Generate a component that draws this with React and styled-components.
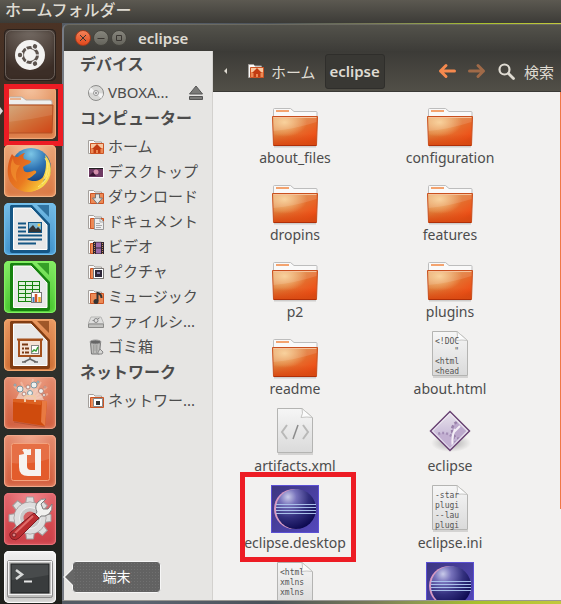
import React, { useId } from 'react';
import styled, { createGlobalStyle, css } from 'styled-components';

const GlobalStyle = createGlobalStyle`
  *, *::before, *::after { box-sizing: border-box; }
  body { margin: 0; }
  button { font: inherit; color: inherit; border: 0; padding: 0; background: none; }
  ul { list-style: none; margin: 0; padding: 0; }
  svg { display: block; flex: none; }
`;

const Desktop = styled.div`
  height: 100vh;
  display: flex;
  flex-direction: column;
  overflow: hidden;
  font-family: 'Noto Sans', 'Noto Sans CJK JP', sans-serif;
  font-size: 15px;
  color: #4c4c4c;
  background: linear-gradient(90deg, #4c5257 0%, #5c6470 25%, #4b525a 48%, #787a58 66%, #8c9850 74%, #a8c02c 85%, #c2c83c 100%);
`;

const MenuBar = styled.header`
  flex: none;
  height: 23px;
  padding: 0 5px;
  line-height: 21px;
  font-size: 16px;
  font-weight: 500;
  color: #dfdbd2;
  background: linear-gradient(#5c5951, #3c3b37);
`;

const Workspace = styled.div`
  flex: 1;
  min-height: 0;
  display: flex;
`;

const Launcher = styled.nav`
  flex: none;
  z-index: 2;
  width: 62px;
  padding: 6px 4px 0;
  display: flex;
  flex-direction: column;
  gap: 6px;
  background: linear-gradient(#4b3325, #3b2c23 18%, #3b3a30 36%, #2e302b 60%, #1e201c);
`;

const Tile = styled.button`
  position: relative;
  flex: none;
  width: 52px;
  height: 52px;
  border-radius: 5px;
  background: ${(p) => p.$paint};
  box-shadow: inset 0 0 0 1px ${(p) => p.$edge}, inset 0 0 5px ${(p) => p.$edge};
`;

const pip = css`
  content: '';
  position: absolute;
  top: 20px;
  border: solid transparent;
  border-width: 4px 0;
`;

const RunningMarks = styled.span`
  &::before { ${pip} left: -4px; border-left: 3px solid #ddd; }
  &::after { ${pip} right: -5px; border-right: 3px solid #ddd; }
`;

const Highlight = styled.span`
  position: absolute;
  pointer-events: none;
  border: 5px solid #ed1c24;
  inset: ${(p) => p.$inset};
`;

const Tooltip = styled.span`
  position: absolute;
  left: 68px;
  top: 10px;
  width: 89px;
  height: 32px;
  line-height: 30px;
  text-align: center;
  font-size: 14px;
  color: #fff;
  border: 1px solid #f6f6f6;
  border-radius: 4px;
  background: radial-gradient(#707070 1px, transparent 1px) 0 0 / 3px 3px, #626262;
  &::before, &::after {
    content: '';
    position: absolute;
    border: solid transparent;
    border-width: 9px 0;
  }
  &::before { left: -10px; top: 6px; border-right: 10px solid #f6f6f6; }
  &::after { left: -8px; top: 6px; border-right: 9px solid #666; }
`;

const Frame = styled.main`
  flex: 1;
  min-width: 0;
  display: flex;
  flex-direction: column;
  margin: 1px 0 3px;
  border-left: 2px solid #767b84;
  border-bottom: 1px solid #9a9893;
  border-top-left-radius: 6px;
`;

const TitleBar = styled.div`
  flex: none;
  height: 27px;
  padding-left: 11px;
  display: flex;
  align-items: center;
  gap: 2px;
  border-top: 1px solid #6b6a61;
  border-top-left-radius: 5px;
  color: #dfdbd2;
  background: linear-gradient(#53524b, #3d3c38);
`;

const Control = styled.button`
  width: 16px;
  height: 16px;
  border-radius: 50%;
  border: 1px solid ${(p) => (p.$close ? '#a03a1c' : '#45443e')};
  background: ${(p) => (p.$close ? 'linear-gradient(#f58258, #e2481c)' : 'linear-gradient(#86857c, #65645c)')};
`;

const Title = styled.h1`
  margin: 0 0 0 9px;
  font-size: 15px;
  line-height: 20px;
  font-weight: 600;
`;

const Panes = styled.div`
  flex: 1;
  min-height: 0;
  display: flex;
`;

const Sidebar = styled.aside`
  flex: none;
  width: 149px;
  border-right: 1px solid #d3d1ce;
  background: #e6e5e3;
`;

const SectionTitle = styled.h2`
  margin: 0;
  padding-left: 16px;
  line-height: 27px;
  font-size: 16px;
  font-weight: 700;
`;

const Places = styled.ul`
  padding-top: 2px;
`;

const Place = styled.li`
  display: flex;
  align-items: center;
  height: 25px;
  padding: 0 9px 0 24px;
`;

const PlaceLink = styled.a`
  flex: 1;
  display: flex;
  align-items: center;
  gap: 4px;
  color: inherit;
  text-decoration: none;
  white-space: nowrap;
  font-size: 15px;
  line-height: 25px;
`;

const Browser = styled.section`
  flex: 1;
  min-width: 0;
  display: flex;
  flex-direction: column;
`;

const Toolbar = styled.div`
  flex: none;
  height: 41px;
  padding: 0 7px 0 10px;
  display: flex;
  align-items: center;
  color: #dfdbd2;
  border-bottom: 1px solid #3a3935;
  background: linear-gradient(#3c3b37, #514f47);
`;

const Crumb = styled.button`
  display: flex;
  align-items: center;
  gap: 7px;
  height: 35px;
  padding: 0 ${(p) => (p.$wide ? '9px 0 20px' : '0')};
  white-space: nowrap;
`;

const CurrentCrumb = styled(Crumb)`
  width: 60px;
  justify-content: center;
  font-weight: 600;
  border: 1px solid #2f2e2b;
  border-radius: 3px;
  background: #393834;
`;

const SearchButton = styled(Crumb)`
  gap: 9px;
`;

const Actions = styled.div`
  margin-left: auto;
  display: flex;
  align-items: center;
  gap: 12px;
`;

const Content = styled.div`
  flex: 1;
  min-height: 0;
  display: flex;
  overflow: hidden;
  background: #f2f1f0;
`;

const FileGrid = styled.ul`
  flex: 1;
  display: grid;
  grid-template-columns: repeat(auto-fill, 154px);
  grid-auto-rows: 68px;
  align-content: start;
  gap: 9px 1px;
  padding: 8px 0 0 5px;
`;

const FileCell = styled.li`
  position: relative;
  display: flex;
  justify-content: center;
`;

const FileButton = styled.button`
  display: flex;
  flex-direction: column;
  align-items: center;
  font-size: 14px;
  line-height: 20px;
`;

const ScrollMark = styled.div`
  flex: none;
  width: 1px;
  height: 82%;
  background: #f07746;
`;

/* ---------- launcher artwork ---------- */

const UbuntuLogo = () => (
  <svg width="52" height="52" viewBox="0 0 52 52">
    <rect x="1.5" y="1.5" width="49" height="49" rx="6" fill="none" stroke="#8a827c" strokeOpacity=".6" />
    <circle cx="26" cy="26" r="15" fill="#f3f2f1" />
    <circle cx="26" cy="26" r="7.5" fill="none" stroke="#5c534e" strokeWidth="3" />
    {[60, 180, 300].map((a) => (
      <g key={a} transform={`rotate(${a} 26 26)`}>
        <circle cx="36" cy="26" r="3.4" fill="#f3f2f1" />
        <circle cx="36" cy="26" r="2.2" fill="#5c534e" />
      </g>
    ))}
    {[0, 120, 240].map((a) => (
      <path key={a} d="M31 26h6" stroke="#f3f2f1" strokeWidth="1.2" transform={`rotate(${a} 26 26)`} />
    ))}
  </svg>
);

const HomeFolderLogo = () => {
  const id = useId();
  return (
    <svg width="52" height="52" viewBox="0 0 52 52">
      <defs>
        <linearGradient id={id} x1="0" y1="0" x2="1" y2="1">
          <stop offset="0" stopColor="#cfa070" />
          <stop offset=".5" stopColor="#d07038" />
          <stop offset="1" stopColor="#d04416" />
        </linearGradient>
      </defs>
      <path d="M4 18v-6q0-2 2-2h12l4 3h24q2 0 2 2v3z" fill="#eee" stroke="#b9aea6" />
      <path d="M6 12h11" stroke="#e9b28e" strokeWidth="2" />
      <path d="M3 18h46l-1 28H4z" fill={`url(#${id})`} stroke="#b55125" />
      <path d="M4 19h44v9Q26 33 4 35z" fill="#fff" opacity=".1" />
    </svg>
  );
};

const FirefoxLogo = () => {
  const id = useId();
  return (
    <svg width="52" height="52" viewBox="0 0 52 52">
      <defs>
        <radialGradient id={id} cx=".5" cy=".15" r=".85">
          <stop offset="0" stopColor="#7cc6e6" />
          <stop offset=".45" stopColor="#2f74b4" />
          <stop offset="1" stopColor="#0d2a62" />
        </radialGradient>
        <linearGradient id={`${id}f`} x1="0" y1="0" x2="1" y2=".8">
          <stop offset="0" stopColor="#d9541c" />
          <stop offset=".6" stopColor="#ea7a20" />
          <stop offset="1" stopColor="#f9cf3a" />
        </linearGradient>
      </defs>
      <circle cx="27" cy="23" r="20" fill={`url(#${id})`} />
      <path d="M41 10c7 7 8 19 2 27-4 6-10 9-17 9 8-3 14-7 16-14-2 2-3 2-4 2 4-7 5-15 3-24z" fill="#f8d94a" />
      <path d="M8 9c1 2 3 3 6 3 2-2 5-4 7-4-2 2-2 4-1 6 2 1 5 1 7 2 0 2-2 3-5 4l-3 2 1 4c3 2 6 1 9 0 2-1 4 0 3 2-3 2-5 5-9 6 6 4 14 2 18-4-1 10-8 17-16 17C13 47 5 39 4 30c-1-8 1-16 4-21z" fill={`url(#${id}f)`} />
      <path d="M9 13c-4 8-3 18 4 24-2-7-1-12 3-17-4 1-7-2-7-7z" fill="#f29330" opacity=".65" />
      <path d="M41 13c4 7 3 14-1 21M44 17c3 9 0 17-6 22M34 42c6-4 9-10 9-17" stroke="#fbe879" fill="none" />
    </svg>
  );
};

const OfficeLogo = ({ dark, children }) => (
  <svg width="52" height="52" viewBox="0 0 52 52">
    <path d="M33 2h12v12z" fill={dark} opacity=".7" />
    <path d="M7 2h21l18 19v27q0 2-2 2H8q-2 0-2-2V3z" fill={dark} />
    <path d="M9.500 5H27l16 17v24.500H9.500z" fill="#e8e8e8" stroke="#fff" />
    {children}
  </svg>
);

const WriterLogo = () => (
  <OfficeLogo dark="#155684">
    <path d="M14 20.500h8M14 24.500h8M14 28.500h8M14 32.500h24M14 36.500h24M14 40.500h18" stroke="#155684" strokeWidth="2" />
    <rect x="24.500" y="19.500" width="13" height="10" fill="#7db9d8" stroke="#155684" />
    <path d="M25 29v-3l4-4 3 4 2-2 3 3v2z" fill="#333" />
    <circle cx="35" cy="22" r="1.500" fill="#f7c749" />
  </OfficeLogo>
);

const CalcLogo = () => (
  <OfficeLogo dark="#16820f">
    <rect x="14" y="20" width="22" height="21" fill="#16820f" />
    {[22, 26, 30, 34, 38].map((y) => (
      <path key={y} d={`M15 ${y + 0.5}h6m1 0h6m1 0h6`} stroke="#dff0da" strokeWidth="3" />
    ))}
    <rect x="27.500" y="31.500" width="10" height="10" fill="#fff" stroke="#777" />
    <path d="M29.500 41v-5" stroke="#3c7fc0" strokeWidth="2" />
    <path d="M32 41v-8" stroke="#d0542a" strokeWidth="2.500" />
    <path d="M35.500 41v-5" stroke="#e8a72c" strokeWidth="2.500" />
  </OfficeLogo>
);

const ImpressLogo = () => (
  <OfficeLogo dark="#823d12">
    <rect x="15" y="21" width="22" height="16" fill="#f4e3d6" stroke="#a5501c" strokeWidth="2" />
    <path d="M13 20.500h26" stroke="#a5501c" strokeWidth="2" />
    <path d="M18 25.500h6M18 29.500h2m1 0h4M18 33.500h2m1 0h4" stroke="#7a3a14" strokeWidth="2" />
    <rect x="27.500" y="26.500" width="7" height="8" fill="#fff" stroke="#888" />
    <path d="M28 33l2-2 2 1 2-4" stroke="#37a037" fill="none" strokeWidth="1.500" />
    <path d="M26 38v2l-6 3M26 40l6 3M18 43h4m8 0h4" stroke="#666" fill="none" strokeWidth="1.500" />
  </OfficeLogo>
);

const SoftwareLogo = () => (
  <svg width="52" height="52" viewBox="0 0 52 52">
    <path d="M26 24L10 9M26 24L17 5M26 24L29 2M26 24L37 5M26 24L43 10M26 24L44 17" stroke="#f6c7b0" strokeWidth="2" opacity=".6" />
    <path d="M12 22l5-10 8-3 9 3 6 11z" fill="#f2d0c0" opacity=".75" />
    {[[16, 12, 3], [24, 10, 2], [30, 8, 3], [37, 14, 2.5], [26, 16, 2.5], [20, 17, 2], [34, 5, 1], [41, 10, 1], [11, 8, 1], [40, 18, 1.500]].map(([x, y, r], i) => (
      <circle key={i} cx={x} cy={y} r={r} fill="#eef0ee" stroke={i % 2 ? '#b98376' : '#7b99a4'} />
    ))}
    <path d="M9 22l34 2-2 25-32-5z" fill="#cf4b0d" />
    <path d="M38 24l5 0-2 25-4-4z" fill="#e87a42" />
    <path d="M9 22l29 2-1 4-28-3z" fill="#dc6121" />
    <path d="M21 25v-4q0-2 2-2h6q2 0 2 2v4" fill="none" stroke="#f1caa7" strokeWidth="2" />
    <path d="M10 45l31 5" stroke="#8f3b1c" opacity=".4" />
  </svg>
);

const UbuntuOneLogo = () => (
  <svg width="52" height="52" viewBox="0 0 52 52">
    <rect x="7.500" y="8.500" width="38" height="37" rx="2" fill="#e35c2c" stroke="#f3a27d" />
    <path d="M8 9h37v15Q26 30 8 28z" fill="#fff" opacity=".12" />
    <path d="M15 32V20l5-1-1-5h4v17q0 4 4 4h4V14h6v27H24q-9 0-9-9z" fill="#f6f2ef" />
    <path d="M20 20v-3l-2-2 9-1v6z" fill="#f6f2ef" />
  </svg>
);

const SettingsLogo = () => (
  <svg width="52" height="52" viewBox="0 0 52 52">
    <g fill="#dedede" stroke="#a19b9b">
      {[0, 45, 90, 135, 180, 225, 270, 315].map((a) => (
        <path key={a} d="M21.500 12l1-8h7l1 8z" transform={`rotate(${a} 26 25)`} />
      ))}
      <circle cx="26" cy="25" r="16" />
    </g>
    <circle cx="26" cy="25" r="15.500" fill="#dedede" />
    <circle cx="26" cy="25" r="10.500" fill="#c9c9c9" stroke="#f0f0f0" />
    <circle cx="26" cy="25" r="6.500" fill="#d45f61" />
    <path d="M30 23l3-4q-3-6 1-10 3-4 8-3l-5 5 2 5 5 0 4-5q1 6-3 10-4 3-8 2l-3 4z" fill="#f1f1ef" stroke="#7c7c7c" />
    <path d="M30 20l5 5-20 20q-3 3-7 1-4-4-1-7z" fill="#ba2e31" stroke="#7e1c22" />
    <path d="M29 23L9 42" stroke="#e06d6b" strokeWidth="2" />
    <circle cx="10" cy="42" r="2" fill="#d98080" stroke="#7e1c22" />
  </svg>
);

const TerminalLogo = () => (
  <svg width="52" height="52" viewBox="0 0 52 52">
    <rect x="3.500" y="9.500" width="45" height="37" rx="2" fill="#bfbfbd" stroke="#888" />
    <rect x="4.500" y="10.500" width="43" height="33" fill="none" stroke="#f2f2f2" />
    <rect x="7" y="13" width="38" height="29" fill="#393c3d" stroke="#1f2122" />
    <path d="M7.500 13.500h37V24Q26 28 7.500 29z" fill="#fff" opacity=".08" />
    <path d="M12 19l6 4.500-6 4.500" fill="none" stroke="#d8dad9" strokeWidth="2.500" />
    <path d="M20 30.500h8" stroke="#e6e6e6" strokeWidth="2" />
  </svg>
);

/* ---------- file artwork ---------- */

const FolderIcon = () => {
  const id = useId();
  return (
    <svg width="48" height="48" viewBox="0 0 48 48">
      <defs>
        <linearGradient id={id} x1="0" y1="0" x2="1" y2="1">
          <stop offset="0" stopColor="#e39a5c" />
          <stop offset=".4" stopColor="#e07c38" />
          <stop offset=".8" stopColor="#ee5118" />
          <stop offset="1" stopColor="#d03c0c" />
        </linearGradient>
        <linearGradient id={`${id}b`} x1="0" y1="0" x2="0" y2="1">
          <stop offset=".6" stopColor="#d84a12" stopOpacity="0" />
          <stop offset="1" stopColor="#d84a12" />
        </linearGradient>
        <radialGradient id={`${id}g`} cx=".27" cy=".2" r=".5">
          <stop offset="0" stopColor="#ffe2a8" stopOpacity=".75" />
          <stop offset="1" stopColor="#ffe2a8" stopOpacity="0" />
        </radialGradient>
      </defs>
      <path d="M3 46.500h42" stroke="#000" strokeOpacity=".15" strokeWidth="2" />
      <path d="M2.500 17V9.500q0-1 1-1h16l3.500 3h22q1 0 1 1V17z" fill="#f9f9f9" stroke="#bdbdbd" />
      <path d="M5 11h13" stroke="#f3a36f" strokeWidth="2" />
      <path d="M1.500 16.500h45l-1 29h-43z" fill={`url(#${id})`} />
      <path d="M1.500 16.500h45l-1 29h-43z" fill={`url(#${id}b)`} />
      <path d="M1.500 16.500h45l-1 29h-43z" fill={`url(#${id}g)`} stroke="#c9501f" />
      <path d="M2.500 18v13Q24 29 45.500 22v-4z" fill="#fff" opacity=".12" />
      <path d="M2.500 17.500h43" stroke="#f6c39c" />
      <path d="M3 45.500h42" stroke="#b02f08" />
    </svg>
  );
};

const Paper = ({ children }) => {
  const id = useId();
  return (
    <svg width="48" height="48" viewBox="0 0 48 48">
      <defs>
        <linearGradient id={id} x1="0" y1="0" x2="0" y2="1">
          <stop offset="0" stopColor="#f6f6f6" />
          <stop offset="1" stopColor="#dadada" />
        </linearGradient>
        <clipPath id={`${id}c`}><path d="M8 1h32v44H8z" /></clipPath>
      </defs>
      <path d="M7 46h35" stroke="#000" strokeOpacity=".12" strokeWidth="2" />
      <path d="M6.500 .5H31l10.500 9v35h-35z" fill={`url(#${id})`} stroke="#b4b4b2" />
      <path d="M31 .5q1.500 5-1 9 6-1 11.500 0z" fill="#fbfbfb" stroke="#c5c5c3" />
      <g clipPath={`url(#${id}c)`}>{children}</g>
    </svg>
  );
};

const SnippetText = styled.text`
  font-family: 'DejaVu Sans Mono', monospace;
  font-size: 8px;
  fill: #555;
  white-space: pre;
`;

const Snippet = ({ lines }) => (
  <Paper>
    {lines.map((line, i) => (
      <SnippetText key={i} x="9" y={13 + i * 10}>{line}</SnippetText>
    ))}
  </Paper>
);

const MarkupIcon = () => (
  <Paper>
    <path d="M16 17l-5 7 5 7M32 17l5 7-5 7" fill="none" stroke="#b9b9b8" strokeWidth="2" />
    <path d="M27 17l-5 14" stroke="#8b8b8b" strokeWidth="1.500" />
  </Paper>
);

const ExecIcon = () => {
  const id = useId();
  return (
    <svg width="48" height="48" viewBox="0 0 48 48">
      <defs>
        <linearGradient id={id} x1="0" y1="0" x2="0" y2="1">
          <stop offset="0" stopColor="#e9e4ec" />
          <stop offset="1" stopColor="#b4a0cb" />
        </linearGradient>
        <radialGradient id={`${id}s`}>
          <stop offset="0" stopOpacity=".3" />
          <stop offset="1" stopOpacity="0" />
        </radialGradient>
        <clipPath id={`${id}c`}><path d="M24 7l16 16-16 16L8 23z" /></clipPath>
      </defs>
      <ellipse cx="25" cy="35" rx="20" ry="9" fill={`url(#${id}s)`} />
      <path d="M24 3.500L43.500 23 24 42.500 4.500 23z" fill={`url(#${id})`} stroke="#6a4474" strokeWidth="1.500" />
      <path d="M24 5.500L41.500 23 24 40.500 6.500 23z" fill="none" stroke="#f5f1f7" />
      <g clipPath={`url(#${id}c)`}>
        <circle cx="17" cy="38" r="13" fill="#c3b0d2" stroke="#a48eb6" strokeWidth="2.500" strokeDasharray="2 2" />
        <circle cx="35" cy="22" r="9" fill="#bca8cc" stroke="#9a82ab" strokeWidth="2.500" strokeDasharray="3 2" />
        <path d="M29 21q-4 9-2 18M27 25l7-7" stroke="#f3eef6" strokeWidth="2" fill="none" />
      </g>
    </svg>
  );
};

const EclipseIcon = () => {
  const id = useId();
  return (
    <svg width="48" height="48" viewBox="0 0 48 48">
      <defs>
        <linearGradient id={id} x1="0" y1="0" x2="1" y2="1">
          <stop offset="0" stopColor="#3d3680" />
          <stop offset="1" stopColor="#5448bc" />
        </linearGradient>
        <radialGradient id={`${id}s`} cx=".3" cy=".2" r=".85">
          <stop offset="0" stopColor="#c9cbea" />
          <stop offset=".25" stopColor="#7772bb" />
          <stop offset=".6" stopColor="#33307e" />
          <stop offset="1" stopColor="#0c0950" />
        </radialGradient>
      </defs>
      <rect x=".5" y=".5" width="47" height="47" fill={`url(#${id})`} stroke="#5b50d4" />
      <circle cx="23" cy="24" r="20" fill="#d79ac2" />
      <circle cx="25" cy="24" r="20" fill={`url(#${id}s)`} />
      <path d="M5 19.500h40M5 22.500h40M5 25.500h40M5 28.500h40" stroke="#a9c0ea" />
    </svg>
  );
};

/* ---------- sidebar and toolbar artwork ---------- */

const SmallFolder = ({ children }) => (
  <svg width="16" height="16" viewBox="0 0 16 16">
    <path d="M.5 14.500V1.500h5l1.500 1.500h6.500v11.500z" fill="#fafafa" stroke="#a4a09c" />
    <path d="M2.500 4.500h13v10h-13z" fill="#ec8a55" stroke="#cc5424" />
    {children}
  </svg>
);

const placeArt = {
  home: <SmallFolder><path d="M3 5h12v4H3z" fill="#f7c7a0" /><path d="M9 5l5 5h-1.500v4h-2.500v-3H8v3H5.500v-4H4z" fill="#c23c12" /></SmallFolder>,
  desktop: (
    <svg width="16" height="16" viewBox="0 0 16 16">
      <rect x=".5" y="3.500" width="15" height="10" fill="#6f3a63" stroke="#fff" />
      <path d="M1 4h14v1H1z" fill="#222" />
      <circle cx="8" cy="8" r="2.500" fill="#eda5bd" opacity=".8" />
      <path d="M1 12l4-4 3 4z" fill="#3a1733" />
    </svg>
  ),
  download: <SmallFolder><path d="M7.500 5h4v4h3l-5 6-5-6h3z" fill="#e3e3e1" stroke="#777" /></SmallFolder>,
  documents: <SmallFolder><path d="M6.500 4.500h6l3 3v8h-9z" fill="#eee" stroke="#999" /><path d="M12 5v3h3M8 9.500h4M8 11.500h6M8 13.500h5" stroke="#aaa" fill="none" /></SmallFolder>,
  video: <SmallFolder><path d="M5 3h11v12H5z" fill="#2e2430" /><path d="M8 3.500h5v5H8zM8 9.500h5v5H8z" fill="#9a6aa8" /><path d="M6.500 4v11M14.500 4v11" stroke="#c98a5a" strokeDasharray="1 1" /></SmallFolder>,
  pictures: <SmallFolder><path d="M5.500 4.500h10v10h-10z" fill="#fff" stroke="#777" /><path d="M7 6h7v7H7z" fill="#2d2638" /><path d="M9 8h3v2H9z" fill="#8279a0" /></SmallFolder>,
  music: <SmallFolder><path d="M9.500 12V4q4 1 4 5" fill="none" stroke="#333" strokeWidth="2" /><circle cx="8" cy="12.500" r="2.500" fill="#333" /></SmallFolder>,
  disk: (
    <svg width="16" height="16" viewBox="0 0 16 16">
      <path d="M3 3h10l3 7H0z" fill="#dededd" stroke="#b6b6b4" />
      <path d="M.5 10h15v3.500H.5z" fill="#c2c2c0" stroke="#8b8b89" />
      <circle cx="8" cy="6.500" r="2" fill="none" stroke="#888" />
      <path d="M4.500 6.500h2M9.500 5l2-1" stroke="#888" />
    </svg>
  ),
  trash: (
    <svg width="16" height="16" viewBox="0 0 16 16">
      <path d="M2.500 3.500h10l-1 11.500h-8z" fill="#bcbcba" stroke="#777" />
      <ellipse cx="7.500" cy="3" rx="5.500" ry="2" fill="#666" stroke="#999" />
      <path d="M5 7h5M5 9h5M5 11h5M5.500 6v8M8.500 6v8" stroke="#a0a09e" />
      <path d="M10 13l2-3 3 3-1 2h-4z" fill="#d6d6d4" stroke="#888" />
    </svg>
  ),
  network: <SmallFolder><path d="M5.500 5.500h9v8h-9z" fill="#fff" stroke="#888" /><path d="M8 8h4v4H8z" fill="#333" /></SmallFolder>,
  disc: (
    <svg width="16" height="16" viewBox="0 0 16 16">
      <circle cx="8" cy="8" r="7.500" fill="#d8d8d6" stroke="#8c8c8a" />
      <path d="M8 8L3 2.500q-2 2-2 5zM8 8l5 5.500q2-2 2-5z" fill="#f5f5f5" />
      <circle cx="8" cy="8" r="2.500" fill="#eee" stroke="#999" />
      <circle cx="8" cy="8" r="1" fill="#888" />
    </svg>
  ),
};

const EjectIcon = () => (
  <svg width="14" height="16" viewBox="0 0 14 16">
    <path d="M7 1l6.500 8H.5z" fill="#7b7b79" stroke="#555" />
    <path d="M.5 11.500h13v3H.5z" fill="#7b7b79" stroke="#555" />
  </svg>
);

const ArrowIcon = ({ forward }) => (
  <svg width="18" height="16" viewBox="0 0 18 16">
    <path
      d={forward ? 'M1.500 8h14M10 2.500L15.500 8 10 13.500' : 'M16.500 8h-14M8 2.500L2.500 8 8 13.500'}
      fill="none"
      stroke={forward ? '#a06a48' : '#f5894e'}
      strokeWidth="3"
      strokeLinecap="round"
      strokeLinejoin="round"
    />
  </svg>
);

const SearchIcon = () => (
  <svg width="17" height="17" viewBox="0 0 17 17">
    <circle cx="6.500" cy="6.500" r="5" fill="none" stroke="#dfdbd2" strokeWidth="2.200" />
    <path d="M10.500 10.500l5 5" stroke="#dfdbd2" strokeWidth="2.800" strokeLinecap="round" />
  </svg>
);

const ControlGlyph = ({ d }) => (
  <svg width="14" height="14" viewBox="0 0 14 14"><path d={d} fill="none" stroke="#3a3632" /></svg>
);

/* ---------- data ---------- */

const orange = 'radial-gradient(circle at 50% 0, #f6c7a4, #e08a55 60%, #d87440)';
const coral = 'radial-gradient(circle at 50% 0, #f0aa90, #d86c4c 65%, #cf5b3c)';

const apps = [
  { name: 'Dash', Art: UbuntuLogo, paint: 'radial-gradient(circle at 50% 0, #766d66, #3c2e27 75%)', edge: '#2a201b' },
  { name: 'ホームフォルダー', Art: HomeFolderLogo, paint: orange, edge: '#f0a878', running: true, marked: true },
  { name: 'Firefox', Art: FirefoxLogo, paint: orange, edge: '#f2b487' },
  { name: 'Writer', Art: WriterLogo, paint: 'linear-gradient(#76bde6, #3d90c9)', edge: '#72bfec' },
  { name: 'Calc', Art: CalcLogo, paint: 'linear-gradient(#86ea66, #44c42c)', edge: '#82f062' },
  { name: 'Impress', Art: ImpressLogo, paint: 'linear-gradient(#e99861, #cc6c32)', edge: '#f0a56c' },
  { name: 'Software', Art: SoftwareLogo, paint: coral, edge: '#eba185' },
  { name: 'Ubuntu One', Art: UbuntuOneLogo, paint: coral, edge: '#f0a88b' },
  { name: 'Settings', Art: SettingsLogo, paint: 'radial-gradient(circle at 50% 0, #f08b90, #d3494f 65%, #c83d46)', edge: '#e87379' },
  { name: '端末', Art: TerminalLogo, paint: 'linear-gradient(#f0f0ef, #c9c9c7)', edge: '#fafafa', tip: true },
];

const sections = [
  { title: 'デバイス', places: [{ label: 'VBOXA...', art: 'disc', eject: true }] },
  {
    title: 'コンピューター',
    places: [
      { label: 'ホーム', art: 'home' },
      { label: 'デスクトップ', art: 'desktop' },
      { label: 'ダウンロード', art: 'download' },
      { label: 'ドキュメント', art: 'documents' },
      { label: 'ビデオ', art: 'video' },
      { label: 'ピクチャ', art: 'pictures' },
      { label: 'ミュージック', art: 'music' },
      { label: 'ファイルシ...', art: 'disk' },
      { label: 'ゴミ箱', art: 'trash' },
    ],
  },
  { title: 'ネットワーク', places: [{ label: 'ネットワー...', art: 'network' }] },
];

const folder = <FolderIcon />;
const files = [
  { name: 'about_files', icon: folder },
  { name: 'configuration', icon: folder },
  { name: 'dropins', icon: folder },
  { name: 'features', icon: folder },
  { name: 'p2', icon: folder },
  { name: 'plugins', icon: folder },
  { name: 'readme', icon: folder },
  { name: 'about.html', icon: <Snippet lines={['<!DOC', '    "', '<html', '<head']} /> },
  { name: 'artifacts.xml', icon: <MarkupIcon /> },
  { name: 'eclipse', icon: <ExecIcon /> },
  { name: 'eclipse.desktop', icon: <EclipseIcon />, marked: true },
  { name: 'eclipse.ini', icon: <Snippet lines={['-star', 'plugi', '--lau', 'plugi']} /> },
  { name: '', icon: <Snippet lines={['<html', 'xmlns', 'xmlns']} /> },
  { name: '', icon: <EclipseIcon /> },
];

export default function App() {
  return (
    <Desktop>
      <GlobalStyle />
      <MenuBar>ホームフォルダー</MenuBar>
      <Workspace>
        <Launcher>
          {apps.map(({ name, Art, paint, edge, running, marked, tip }) => (
            <Tile key={name} aria-label={name} $paint={paint} $edge={edge}>
              <Art />
              {running && <RunningMarks />}
              {marked && <Highlight $inset="-3px -7px -7px 0" />}
              {tip && <Tooltip role="tooltip">{name}</Tooltip>}
            </Tile>
          ))}
        </Launcher>
        <Frame>
          <TitleBar>
            <Control $close aria-label="Close"><ControlGlyph d="M4 4l6 6M10 4l-6 6" /></Control>
            <Control aria-label="Minimize"><ControlGlyph d="M3.500 7.500h7" /></Control>
            <Control aria-label="Maximize"><ControlGlyph d="M4.500 4.500h5v5h-5z" /></Control>
            <Title>eclipse</Title>
          </TitleBar>
          <Panes>
            <Sidebar>
              {sections.map(({ title, places }) => (
                <section key={title}>
                  <SectionTitle>{title}</SectionTitle>
                  <Places>
                    {places.map(({ label, art, eject }) => (
                      <Place key={label}>
                        <PlaceLink href="#">{placeArt[art]}{label}</PlaceLink>
                        {eject && <button aria-label="Eject"><EjectIcon /></button>}
                      </Place>
                    ))}
                  </Places>
                </section>
              ))}
            </Sidebar>
            <Browser>
              <Toolbar>
                <button aria-label="Previous">
                  <svg width="5" height="6" viewBox="0 0 5 6"><path d="M4 0v6L1 3z" fill="#dfdbd2" /></svg>
                </button>
                <Crumb $wide>{placeArt.home}ホーム</Crumb>
                <CurrentCrumb>eclipse</CurrentCrumb>
                <Actions>
                  <button aria-label="Back"><ArrowIcon /></button>
                  <button aria-label="Forward"><ArrowIcon forward /></button>
                  <SearchButton><SearchIcon />検索</SearchButton>
                </Actions>
              </Toolbar>
              <Content>
                <FileGrid>
                  {files.map(({ name, icon, marked }, i) => (
                    <FileCell key={i}>
                      <FileButton>{icon}{name}</FileButton>
                      {marked && <Highlight $inset="-13px 16px -9px 22px" />}
                    </FileCell>
                  ))}
                </FileGrid>
                <ScrollMark />
              </Content>
            </Browser>
          </Panes>
        </Frame>
      </Workspace>
    </Desktop>
  );
}
